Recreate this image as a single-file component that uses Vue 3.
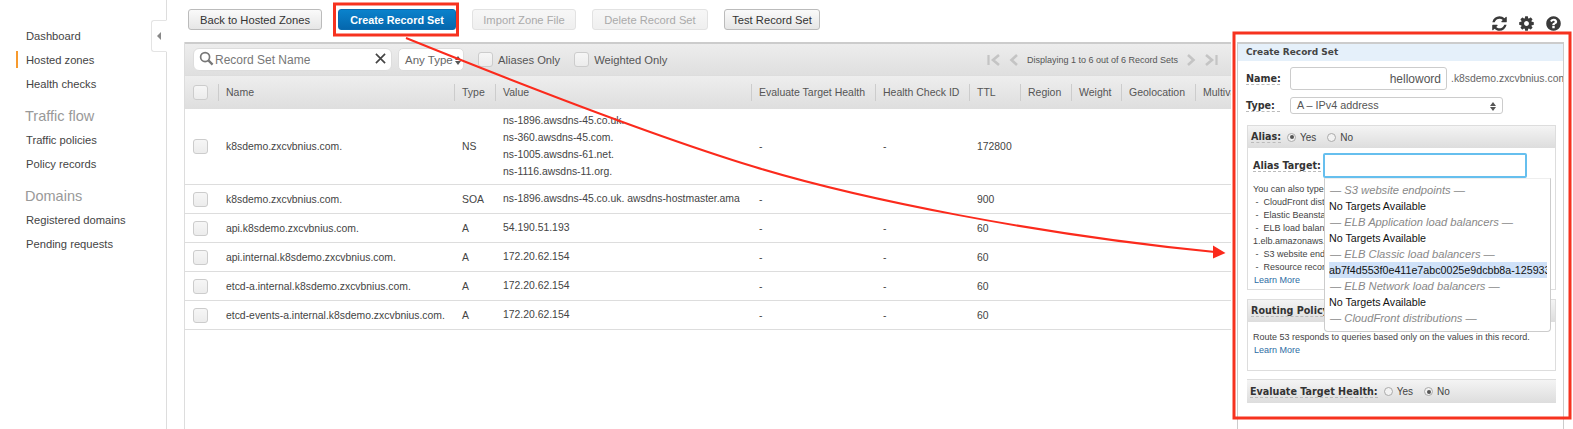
<template>
  <div class="page">
    <aside class="sidebar">
      <div v-for="group in navGroups" :key="group.links[0]" class="nav-group">
        <h3 v-if="group.title" class="nav-title">{{ group.title }}</h3>
        <a v-for="link in group.links" :key="link" :class="['nav-link', { active: link === 'Hosted zones' }]">{{ link }}</a>
      </div>
      <div class="collapse-tab"><span class="collapse-arrow"></span></div>
    </aside>

    <main class="main">
      <div class="toolbar">
        <button class="btn back">Back to Hosted Zones</button>
        <button class="btn primary">Create Record Set</button>
        <button class="btn disabled import">Import Zone File</button>
        <button class="btn disabled delete">Delete Record Set</button>
        <button class="btn test">Test Record Set</button>
        <div class="tool-icons">
          <svg viewBox="0 0 1792 1792" class="tool-icon"><path d="M1639 1056q0 5-1 7-64 268-268 434.5t-478 166.5q-146 0-282.5-55t-243.5-157l-129 129q-19 19-45 19t-45-19-19-45v-448q0-26 19-45t45-19h448q26 0 45 19t19 45-19 45l-137 137q71 66 161 102t187 36q134 0 250-65t186-179q11-17 53-117 8-23 30-23h192q13 0 22.5 9.5t9.5 22.5zm25-800v448q0 26-19 45t-45 19h-448q-26 0-45-19t-19-45 19-45l138-138q-148-137-349-137-134 0-250 65t-186 179q-11 17-53 117-8 23-30 23h-199q-13 0-22.5-9.5t-9.5-22.5v-7q65-268 270-434.5t480-166.5q146 0 284 55.5t245 156.5l130-129q19-19 45-19t45 19 19 45z"/></svg>
          <svg viewBox="0 0 1792 1792" class="tool-icon"><path d="M1152 896q0-106-75-181t-181-75-181 75-75 181 75 181 181 75 181-75 75-181zm512-109v222q0 12-8 23t-20 13l-185 28q-19 54-39 91 35 50 107 138 10 12 10 25t-9 23q-27 37-99 108t-94 71q-12 0-26-9l-138-108q-44 23-91 38-16 136-29 186-7 28-36 28h-222q-14 0-24.5-8.5t-11.5-21.5l-28-184q-49-16-90-37l-141 107q-10 9-25 9-14 0-25-11-126-114-165-168-7-10-7-23 0-12 8-23 15-21 51-66.5t54-70.5q-27-50-41-99l-183-27q-13-2-21-12.5t-8-23.5v-222q0-12 8-23t19-13l186-28q14-46 39-92-40-57-107-138-10-12-10-24 0-10 9-23 26-36 98.5-107.5t94.5-71.5q13 0 26 10l138 107q44-23 91-38 16-136 29-186 7-28 36-28h222q14 0 24.5 8.5t11.5 21.5l28 184q49 16 90 37l142-107q9-9 24-9 13 0 25 10 129 119 165 170 7 8 7 22 0 12-8 23-15 21-51 66.5t-54 70.5q26 50 41 98l183 28q13 2 21 12.5t8 23.5z"/></svg>
          <svg viewBox="0 0 1792 1792" class="tool-icon"><path d="M1024 1376v-192q0-14-9-23t-23-9h-192q-14 0-23 9t-9 23v192q0 14 9 23t23 9h192q14 0 23-9t9-23zm256-672q0-88-55.5-163t-138.5-116-170-41q-243 0-371 213-15 24 8 42l132 100q7 6 19 6 16 0 25-12 53-68 86-92 34-24 86-24 48 0 85.5 26t37.5 59q0 38-20 61t-68 45q-63 28-115.5 86.5t-52.5 125.5v36q0 14 9 23t23 9h192q14 0 23-9t9-23q0-19 21.5-49.5t54.5-49.5q32-18 49-28.5t46-35 44.5-48 28-60.5 12.5-81zm384 192q0 209-103 385.5t-279.5 279.5-385.5 103-385.5-103-279.5-279.5-103-385.5 103-385.5 279.5-279.5 385.5-103 385.5 103 279.5 279.5 103 385.5z"/></svg>
        </div>
      </div>

      <div class="content">
        <section class="records">
          <div class="filter-bar">
            <div class="search">
              <svg viewBox="0 0 16 16" class="search-icon"><circle cx="6.5" cy="6.5" r="4.8" fill="none" stroke="#777" stroke-width="1.8"/><path d="M10 10l4.5 4.5" stroke="#777" stroke-width="2.4"/></svg>
              <span class="search-text">Record Set Name</span>
              <svg viewBox="0 0 12 12" class="search-clear"><path d="M1 1l10 10M11 1L1 11" stroke="#444" stroke-width="1.8"/></svg>
            </div>
            <div class="type-select">Any Type<span class="updown"></span></div>
            <label class="filter-check"><span class="check"></span>Aliases Only</label>
            <label class="filter-check"><span class="check"></span>Weighted Only</label>
            <div class="pager">
              <svg viewBox="0 0 14 12" class="pager-icon"><path d="M1.5 1v10" stroke="#c4c4c4" stroke-width="2.2"/><path d="M12 1L6 6l6 5" fill="none" stroke="#c4c4c4" stroke-width="2.6"/></svg>
              <svg viewBox="0 0 10 12" class="pager-icon small"><path d="M8 1L2.5 6 8 11" fill="none" stroke="#c4c4c4" stroke-width="2.6"/></svg>
              <span class="pager-text">Displaying 1 to 6 out of 6 Record Sets</span>
              <svg viewBox="0 0 10 12" class="pager-icon small"><path d="M2 1l5.5 5L2 11" fill="none" stroke="#c4c4c4" stroke-width="2.6"/></svg>
              <svg viewBox="0 0 14 12" class="pager-icon"><path d="M12.5 1v10" stroke="#c4c4c4" stroke-width="2.2"/><path d="M2 1l6 5-6 5" fill="none" stroke="#c4c4c4" stroke-width="2.6"/></svg>
            </div>
          </div>

          <table class="grid">
            <colgroup>
              <col v-for="(w, i) in colWidths" :key="i" :style="{ width: w + 'px' }" />
            </colgroup>
            <thead>
              <tr>
                <th class="check-cell"><span class="check"></span></th>
                <th v-for="h in headers" :key="h"><span class="th-label">{{ h }}</span></th>
              </tr>
            </thead>
            <tbody>
              <tr v-for="(row, i) in rows" :key="i">
                <td class="check-cell"><span class="check"></span></td>
                <td>{{ row.name }}</td>
                <td>{{ row.type }}</td>
                <td class="value-cell"><div v-for="v in row.values" :key="v" class="value-line">{{ v }}</div></td>
                <td>-</td>
                <td>-</td>
                <td>{{ row.ttl }}</td>
                <td></td><td></td><td></td><td></td>
              </tr>
            </tbody>
          </table>
        </section>

        <section class="editor">
          <h2 class="editor-title">Create Record Set</h2>
          <div class="form-row name-row">
            <span class="label">Name:</span>
            <div class="name-input">helloword</div>
            <span class="suffix">.k8sdemo.zxcvbnius.com.</span>
          </div>
          <div class="form-row type-row">
            <span class="label">Type:</span>
            <div class="type-input">A – IPv4 address<span class="updown"></span></div>
          </div>

          <div class="box alias-box">
            <div class="box-head">
              <span class="label">Alias:</span>
              <span class="radio on"></span><span class="radio-text">Yes</span>
              <span class="radio"></span><span class="radio-text">No</span>
            </div>
            <div class="alias-body">
              <div class="alias-row">
                <span class="label">Alias Target:</span>
                <div class="alias-input"></div>
              </div>
              <div class="help">
                <div>You can also type the domain name for the resource. Examples:</div>
                <div>&nbsp;-&nbsp; CloudFront distribution domain name: d111111abcdef8.cloudfront.net</div>
                <div>&nbsp;-&nbsp; Elastic Beanstalk environment CNAME: example.elasticbeanstalk.com</div>
                <div>&nbsp;-&nbsp; ELB load balancer DNS name: example-1234567890.us-west-</div>
                <div>1.elb.amazonaws.com</div>
                <div>&nbsp;-&nbsp; S3 website endpoint: s3-website.us-east-2.amazonaws.com</div>
                <div>&nbsp;-&nbsp; Resource record set in this hosted zone: www.example.com</div>
                <a class="learn">Learn More</a>
              </div>
              <ul class="targets">
                <li v-for="(t, i) in targets" :key="i" :class="['target', t.kind]">{{ t.text }}</li>
              </ul>
            </div>
          </div>

          <div class="box routing-box">
            <div class="box-head"><span class="label">Routing Policy:</span></div>
            <div class="routing-body">
              <div>Route 53 responds to queries based only on the values in this record.</div>
              <a class="learn">Learn More</a>
            </div>
          </div>

          <div class="box-head health">
            <span class="label">Evaluate Target Health:</span>
            <span class="radio"></span><span class="radio-text">Yes</span>
            <span class="radio on"></span><span class="radio-text">No</span>
          </div>
        </section>
      </div>
    </main>

    <!-- red annotations drawn on top of the screenshot -->
    <svg class="annotations" viewBox="0 0 1573 429">
      <rect x="334.5" y="4" width="123" height="31" fill="none" stroke="#f6321f" stroke-width="3"/>
      <rect x="1234" y="33" width="336" height="385" fill="none" stroke="#f6321f" stroke-width="3"/>
      <path d="M406 38C500 76 650 135 755 167S1040 235 1215 252" fill="none" stroke="#fb2a1c" stroke-width="2"/>
      <path d="M1213 245.5L1225.5 253 1213 258.5z" fill="#fb2a1c"/>
    </svg>
  </div>
</template>

<script setup>
const navGroups = [
  { title: '', links: ['Dashboard', 'Hosted zones', 'Health checks'] },
  { title: 'Traffic flow', links: ['Traffic policies', 'Policy records'] },
  { title: 'Domains', links: ['Registered domains', 'Pending requests'] }
];

const headers = ['Name', 'Type', 'Value', 'Evaluate Target Health', 'Health Check ID', 'TTL', 'Region', 'Weight', 'Geolocation', 'Multivalue'];

const colWidths = [33, 236, 41, 256, 124, 94, 51, 51, 50, 74, 86];

const rows = [
  {
    name: 'k8sdemo.zxcvbnius.com.',
    type: 'NS',
    values: ['ns-1896.awsdns-45.co.uk.', 'ns-360.awsdns-45.com.', 'ns-1005.awsdns-61.net.', 'ns-1116.awsdns-11.org.'],
    ttl: '172800'
  },
  {
    name: 'k8sdemo.zxcvbnius.com.',
    type: 'SOA',
    values: ['ns-1896.awsdns-45.co.uk. awsdns-hostmaster.amazon.com. 1 7200 900'],
    ttl: '900'
  },
  { name: 'api.k8sdemo.zxcvbnius.com.', type: 'A', values: ['54.190.51.193'], ttl: '60' },
  { name: 'api.internal.k8sdemo.zxcvbnius.com.', type: 'A', values: ['172.20.62.154'], ttl: '60' },
  { name: 'etcd-a.internal.k8sdemo.zxcvbnius.com.', type: 'A', values: ['172.20.62.154'], ttl: '60' },
  { name: 'etcd-events-a.internal.k8sdemo.zxcvbnius.com.', type: 'A', values: ['172.20.62.154'], ttl: '60' }
];

const targets = [
  { kind: 'group', text: '— S3 website endpoints —' },
  { kind: 'none', text: 'No Targets Available' },
  { kind: 'group', text: '— ELB Application load balancers —' },
  { kind: 'none', text: 'No Targets Available' },
  { kind: 'group', text: '— ELB Classic load balancers —' },
  { kind: 'picked', text: 'ab7f4d553f0e411e7abc0025e9dcbb8a-1259334567.us-east-1.elb.amazonaws.com' },
  { kind: 'group', text: '— ELB Network load balancers —' },
  { kind: 'none', text: 'No Targets Available' },
  { kind: 'group', text: '— CloudFront distributions —' }
];
</script>

<style>
html, body {
  margin: 0;
  background: #fff;
  overflow: hidden;
}
</style>

<style scoped>
.page {
  position: relative;
  display: flex;
  width: 1573px;
  height: 429px;
  overflow: hidden;
  font-family: "Liberation Sans", Arial, sans-serif;
  font-size: 11px;
  color: #444;
}

.sidebar {
  position: relative;
  flex: none;
  width: 167px;
  box-sizing: border-box;
  height: 100%;
  padding-top: 23.5px;
  border-right: 1px solid #ddd;
}

.nav-group {
  margin-bottom: 8px;
}

.nav-title {
  margin: 0;
  padding-left: 25px;
  height: 24px;
  line-height: 24px;
  font-size: 14.5px;
  font-weight: normal;
  color: #999;
}

.nav-link {
  display: block;
  height: 24px;
  line-height: 24px;
  padding-left: 26px;
  font-size: 11.2px;
  color: #444;
  position: relative;
}

.nav-link.active::before {
  content: "";
  position: absolute;
  left: 16px;
  top: 3px;
  width: 2px;
  height: 17px;
  background: #f79a2e;
}

.collapse-tab {
  position: absolute;
  top: 20px;
  right: -1px;
  width: 16px;
  height: 32px;
  box-sizing: border-box;
  border: 1px solid #e4e4e4;
  border-right: 1px solid #fff;
  border-radius: 3px 0 0 3px;
  background: #fff;
  display: flex;
  align-items: center;
  justify-content: center;
}

.collapse-arrow {
  width: 0;
  height: 0;
  border-top: 4px solid transparent;
  border-bottom: 4px solid transparent;
  border-right: 4px solid #888;
}

.main {
  flex: 1;
  min-width: 0;
  padding-left: 17px;
}

.toolbar {
  display: flex;
  align-items: flex-start;
  gap: 16px;
  height: 42px;
  box-sizing: border-box;
  padding: 9px 0 0 4px;
}

.btn {
  height: 21px;
  padding: 0;
  box-sizing: border-box;
  border: 1px solid #bbb;
  border-radius: 3px;
  background: linear-gradient(#fafafa, #e6e6e6);
  font-family: inherit;
  font-size: 11.2px;
  color: #333;
  white-space: nowrap;
}

.btn.back { width: 134px; }
.btn.import { width: 104px; }
.btn.delete { width: 116px; }
.btn.test { width: 96px; }

.btn.primary {
  width: 118px;
  border-color: #0b6cb0;
  background: linear-gradient(#0a82cc, #0567ad);
  color: #fff;
  font-weight: bold;
  font-size: 10.8px;
}

.btn.disabled {
  border-color: #e2e2e2;
  background: linear-gradient(#f7f7f7, #efefef);
  color: #aaa;
}

.tool-icons {
  display: flex;
  gap: 10px;
  margin-left: auto;
  margin-right: 11px;
  margin-top: 6px;
}

.tool-icon {
  width: 17px;
  height: 17px;
  fill: #3a3a3a;
}

.content {
  display: flex;
  gap: 6px;
  height: 387px;
}

.records {
  width: 1047px;
  flex: none;
  overflow: hidden;
  box-sizing: border-box;
  border-left: 1px solid #ddd;
}

.filter-bar {
  display: flex;
  align-items: center;
  height: 34px;
  box-sizing: border-box;
  border-top: 2px solid #ccc;
  border-bottom: 1px solid #ddd;
  padding: 0 13px 0 8px;
  background: linear-gradient(#ededed, #dfdfdf);
  color: #555;
}

.search {
  display: flex;
  align-items: center;
  flex: none;
  width: 199px;
  height: 23px;
  box-sizing: border-box;
  padding: 0 5px;
  background: #fff;
  border: 1px solid #ddd;
  border-radius: 6px;
}

.search-icon {
  width: 15px;
  height: 15px;
  margin-top: -3px;
  flex: none;
}

.search-text {
  margin-left: 1px;
  font-size: 12px;
  color: #777;
}

.search-clear {
  width: 11px;
  height: 11px;
  margin-left: auto;
  margin-top: -3px;
}

.type-select {
  position: relative;
  flex: none;
  width: 66px;
  height: 23px;
  line-height: 23px;
  margin-left: 6px;
  box-sizing: border-box;
  padding-left: 6px;
  background: #fff;
  border: 1px solid #ddd;
  border-radius: 5px;
  font-size: 11.5px;
  color: #666;
  white-space: nowrap;
}

.type-select .updown {
  right: 2px;
}

.updown {
  position: absolute;
  top: 50%;
  right: 6px;
  width: 0;
  height: 0;
  margin-top: 1px;
  border-left: 3px solid transparent;
  border-right: 3px solid transparent;
  border-top: 4px solid #555;
}

.updown::before {
  content: "";
  position: absolute;
  left: -3px;
  top: -9px;
  width: 0;
  height: 0;
  border-left: 3px solid transparent;
  border-right: 3px solid transparent;
  border-bottom: 4px solid #555;
}

.filter-check {
  display: flex;
  align-items: center;
  flex: none;
  margin-left: 14px;
  font-size: 11.2px;
  white-space: nowrap;
}

.check {
  display: inline-block;
  width: 15px;
  height: 15px;
  box-sizing: border-box;
  margin-right: 5px;
  border: 1px solid #ccc;
  border-radius: 3px;
  background: linear-gradient(#f6f6f6, #ececec);
  vertical-align: middle;
}

.pager {
  display: flex;
  align-items: center;
  flex: none;
  margin-left: auto;
  gap: 8px;
}

.pager-icon {
  width: 14px;
  height: 12px;
}

.pager-icon.small {
  width: 10px;
}

.pager-text {
  font-size: 9px;
  color: #555;
  white-space: nowrap;
}

.grid {
  table-layout: fixed;
  width: 1096px;
  border-collapse: collapse;
}

.grid th {
  height: 33px;
  padding: 0;
  text-align: left;
  font-weight: normal;
  font-size: 10.5px;
  color: #555;
  background: linear-gradient(#eee, #dedede);
  white-space: nowrap;
  overflow: hidden;
}

.th-label {
  display: block;
  height: 17px;
  line-height: 17px;
  padding-left: 7px;
  border-left: 1px solid #ccc;
}

.grid td {
  padding: 0 0 0 8px;
  border-bottom: 1px solid #ddd;
  font-size: 10.4px;
  color: #444;
  height: 28px;
  white-space: nowrap;
  overflow: hidden;
}

.grid th.check-cell {
  padding-left: 8px;
}

.grid td.value-cell {
  height: auto;
  padding: 3px 0 4px 8px;
}

.value-line {
  line-height: 17px;
  overflow: hidden;
  width: 237px;
}

.editor {
  flex: 1;
  min-width: 0;
  max-width: 327px;
  box-sizing: border-box;
  border: 1px solid #ccc;
  border-top-width: 2px;
  border-bottom: 0;
  padding: 0 8px;
  overflow: hidden;
  position: relative;
}

.editor-title {
  margin: 0 -8px;
  padding-left: 8px;
  height: 17px;
  line-height: 17px;
  font-family: "DejaVu Sans", Verdana, sans-serif;
  font-size: 9px;
  font-weight: bold;
  color: #444;
  background: #e5f0fa;
}

.label {
  font-family: "DejaVu Sans", Verdana, sans-serif;
  font-size: 9.6px;
  font-weight: bold;
  color: #333;
  border-bottom: 1px dashed #bbb;
  white-space: nowrap;
}

.form-row {
  display: flex;
  align-items: center;
}

.name-row {
  margin-top: 6px;
  white-space: nowrap;
}

.name-row .label,
.type-row .label {
  width: 34px;
  flex: none;
}

.name-input {
  width: 157px;
  height: 23px;
  line-height: 23px;
  flex: none;
  margin-left: 10px;
  box-sizing: border-box;
  padding-right: 5px;
  text-align: right;
  font-size: 12px;
  color: #555;
  border: 1px solid #ccc;
  border-radius: 3px;
}

.suffix {
  margin-left: 4px;
  font-size: 10.4px;
  color: #666;
}

.type-row {
  margin-top: 7px;
}

.type-input {
  position: relative;
  width: 213px;
  height: 17px;
  line-height: 15px;
  margin-left: 10px;
  box-sizing: border-box;
  padding-left: 6px;
  font-size: 10.8px;
  color: #555;
  border: 1px solid #ccc;
  border-radius: 3px;
}

.box {
  width: 309px;
  margin-left: 1px;
  box-sizing: border-box;
  border: 1px solid #ddd;
  border-top: 0;
  position: relative;
}

.alias-box {
  margin-top: 11px;
  height: 165px;
}

.routing-box {
  margin-top: 9px;
  height: 72px;
}

.box-head {
  display: flex;
  align-items: center;
  height: 23px;
  box-sizing: border-box;
  padding-left: 3px;
  border-top: 1px solid #ddd;
  background: linear-gradient(#f4f4f4, #dddddd);
}

.box-head .label {
  margin-right: 6px;
}

.health {
  width: 309px;
  height: 24px;
  margin: 8px 0 0 1px;
}

.radio {
  width: 9px;
  height: 9px;
  margin-right: 4px;
  box-sizing: border-box;
  border: 1px solid #aaa;
  border-radius: 50%;
  background: #f2f2f2;
  flex: none;
  position: relative;
}

.radio.on::after {
  content: "";
  position: absolute;
  left: 1.5px;
  top: 1.5px;
  width: 4px;
  height: 4px;
  border-radius: 50%;
  background: #555;
}

.radio-text {
  margin-right: 11px;
  font-size: 10px;
  color: #444;
}

.alias-body {
  position: relative;
  padding: 5px;
}

.alias-row {
  display: flex;
  align-items: center;
}

.alias-input {
  width: 204px;
  height: 25px;
  box-sizing: border-box;
  margin-left: 2px;
  border: 2px solid #66bfee;
  border-radius: 2px;
  background: #fff;
}

.help {
  margin-top: 5px;
  font-size: 9px;
  line-height: 13px;
  color: #444;
  white-space: nowrap;
}

.learn {
  display: block;
  padding-left: 1px;
  color: #2d6da4;
  font-size: 9px;
  line-height: 13px;
}

.targets {
  position: absolute;
  top: 30px;
  left: 76px;
  z-index: 2;
  width: 227px;
  height: 154px;
  margin: 0;
  padding: 3px 3px 0 4px;
  box-sizing: border-box;
  list-style: none;
  background: #fff;
  border: 1px solid #ccc;
  border-top-color: #eee;
  border-radius: 0 0 4px 4px;
  font-size: 10.7px;
  overflow: hidden;
}

.target {
  height: 16px;
  line-height: 16px;
  white-space: nowrap;
  overflow: hidden;
  color: #111;
}

.target.group {
  padding-left: 1px;
  font-size: 11.2px;
  font-style: italic;
  color: #888;
}

.target.picked {
  background: #cfe1f8;
}

.routing-body {
  padding: 9px 5px;
  font-size: 9px;
  line-height: 13px;
  color: #444;
  white-space: nowrap;
}

.annotations {
  position: absolute;
  left: 0;
  top: 0;
  width: 1573px;
  height: 429px;
  z-index: 5;
  pointer-events: none;
}
</style>
